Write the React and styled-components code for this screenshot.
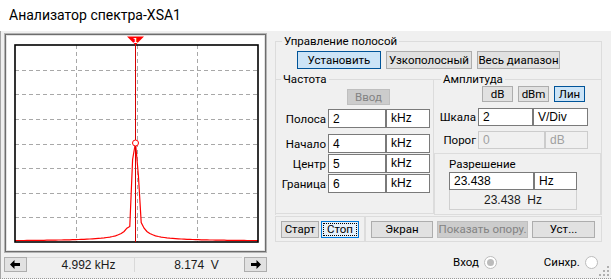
import React from "react";
import styled, { createGlobalStyle, css } from "styled-components";

const GlobalStyle = createGlobalStyle`
  html, body {
    margin: 0;
    padding: 0;
    background: #f0f0f0;
  }
  body {
    font-family: Roboto, "Liberation Sans", sans-serif;
    font-size: 11px;
    color: #000;
  }
`;

const Window = styled.div`
  position: relative;
  width: 611px;
  height: 279px;
  background: #f0f0f0;
  display: flex;
  flex-direction: column;
  overflow: hidden;
  box-sizing: border-box;
  border-bottom: 1px dotted #9a9a9a;
`;

const TitleBar = styled.div`
  height: 31px;
  flex: none;
  background: #fff;
  display: flex;
  align-items: center;
  padding: 0 0 1px 9px;
  box-sizing: border-box;
  font-size: 14px;
`;

const Body = styled.div`
  flex: 1;
  display: flex;
  padding: 2px 0 0 3px;
  border-left: 1px solid #a6a6a6;
`;

/* ---------- left: scope ---------- */

const LeftPane = styled.div`
  width: 263px;
  display: flex;
  flex-direction: column;
`;

const ScopeFrame = styled.div`
  height: 220px;
  box-sizing: border-box;
  border: 1px solid #b4b4b4;
  box-shadow: inset 0 0 0 1px #6d6d6d, inset 0 0 0 2px #e3e3e3;
  background: #fff;
  padding: 2px;
  svg {
    display: block;
  }
`;

const ReadoutBar = styled.div`
  margin-top: 4px;
  height: 15px;
  display: flex;
`;

const ArrowButton = styled.div`
  width: 23px;
  box-sizing: border-box;
  border: 1px solid #adadad;
  background: #e1e1e1;
  display: flex;
  align-items: center;
  justify-content: center;
  margin-left: ${(p) => (p.$right ? "2px" : "0")};
`;

const Readout = styled.div`
  flex: 1;
  box-sizing: border-box;
  border-top: 1px solid #d9d9d9;
  border-left: ${(p) => (p.$first ? "none" : "1px solid #d9d9d9")};
  display: flex;
  align-items: center;
  justify-content: center;
  padding-left: 16px;
  font-family: "Liberation Sans", sans-serif;
  font-size: 12px;
  color: #1a1a1a;
  white-space: pre;
`;

/* ---------- right: controls ---------- */

const RightPane = styled.div`
  margin-left: 8px;
  width: 327px;
  display: flex;
  flex-direction: column;
`;

const Group = styled.fieldset`
  margin: 0;
  padding: 0;
  min-width: 0;
  box-sizing: border-box;
  border: 1px solid #dcdcdc;
`;

const Legend = styled.legend`
  margin-left: ${(p) => p.$indent || 5}px;
  padding: 0 2px;
  font-size: 11.5px;
  line-height: 16px;
`;

const ControlGroup = styled(Group)`
  border-bottom: none;
`;

const ButtonRow = styled.div`
  display: flex;
  gap: ${(p) => p.$gap || 4}px;
  margin-top: ${(p) => p.$top || 0}px;
  padding-left: ${(p) => p.$left || 0}px;
`;

const Button = styled.button`
  box-sizing: border-box;
  width: ${(p) => p.$w}px;
  height: ${(p) => p.$h || 17}px;
  padding: 0;
  font-family: inherit;
  font-size: 11.5px;
  color: #000;
  background: #e1e1e1;
  border: 1px solid #adadad;
  white-space: nowrap;
  ${(p) =>
    p.$active &&
    css`
      background: #cce4f7;
      border-color: #005499;
    `}
  ${(p) =>
    p.$focused &&
    css`
      background: #e5f1fb;
      border-color: #0078d7;
      outline: 1px dotted #000;
      outline-offset: -3px;
    `}
  &:disabled {
    background: #cccccc;
    border-color: #bfbfbf;
    color: #838383;
  }
`;

const BandRow = styled.div`
  display: flex;
  margin-top: 2px;
`;

const FreqGroup = styled(Group)`
  width: 158px;
  height: 143px;
  border-left: none;
  border-bottom: 1px solid #dcdcdc;
`;

const AmpColumn = styled.div`
  flex: 1;
  display: flex;
  flex-direction: column;
`;

const AmpGroup = styled(Group)`
  border-left: none;
  border-right: none;
  border-bottom: none;
  height: 80px;
`;

const FieldRow = styled.div`
  display: flex;
  align-items: center;
  margin-top: ${(p) => p.$top || 0}px;
`;

const FieldLabel = styled.div`
  width: ${(p) => p.$w}px;
  text-align: right;
  padding-right: 2px;
  box-sizing: border-box;
  font-size: 11.5px;
`;

const Field = styled.div`
  box-sizing: border-box;
  width: ${(p) => p.$w}px;
  height: ${(p) => p.$h || 19}px;
  border: 1px solid #7a7a7a;
  background: #fff;
  padding: 0 4px;
  display: flex;
  align-items: ${(p) => (p.$unit ? "flex-start" : "center")};
  padding-top: ${(p) => (p.$unit ? "1px" : "0")};
  font-family: "Liberation Sans", sans-serif;
  font-size: 12px;
  ${(p) =>
    p.$disabled &&
    css`
      border-color: #cccccc;
      background: #f0f0f0;
      color: #a0a0a0;
    `}
`;

const ResolutionBox = styled.div`
  margin-top: 2px;
  height: 62px;
  box-sizing: border-box;
  border: 1px solid #dcdcdc;
  padding: 3px 0 0 14px;
`;

const BoxTitle = styled.div`
  line-height: 15px;
  font-size: 11.5px;
`;

const InfoField = styled.div`
  box-sizing: border-box;
  width: 128px;
  height: 20px;
  border: 1px solid #d0d0d0;
  border-top: none;
  display: flex;
  align-items: center;
  justify-content: center;
  white-space: pre;
  color: #1a1a1a;
  font-family: "Liberation Sans", sans-serif;
  font-size: 12px;
`;

const RunRow = styled.div`
  display: flex;
  margin-top: 1px;
`;

const RunBox = styled.div`
  box-sizing: border-box;
  width: ${(p) => p.$w}px;
  height: 26px;
  border: 1px solid #dcdcdc;
  display: flex;
  align-items: center;
  gap: ${(p) => p.$gap}px;
  padding-left: 5px;
`;

const RadioRow = styled.div`
  display: flex;
  align-items: center;
  margin-top: 13px;
  padding-left: 178px;
  font-size: 11.5px;
`;

const RadioLabel = styled.div`
  display: flex;
  align-items: center;
  gap: 5px;
  margin-right: ${(p) => p.$gap || 0}px;
`;

const Radio = styled.span`
  width: 13px;
  height: 13px;
  box-sizing: border-box;
  border-radius: 50%;
  border: 1px solid #bcbcbc;
  background: #fff;
  display: flex;
  align-items: center;
  justify-content: center;
  &::after {
    content: "";
    width: 7px;
    height: 7px;
    border-radius: 50%;
    background: ${(p) => (p.$checked ? "#bcbcbc" : "transparent")};
  }
`;

const Grip = styled.svg`
  position: absolute;
  right: 1px;
  bottom: 1px;
`;

/* ---------- drawings ---------- */

const Arrow = ({ right }) => (
  <svg width="11" height="9" viewBox="0 0 11 9">
    <path
      d="M0 4.5 L4.5 0 L4.5 3 L10 3 L10 6 L4.5 6 L4.5 9 Z"
      fill="#000"
      transform={right ? "translate(11 0) scale(-1 1)" : undefined}
    />
  </svg>
);

const PLOT = { x: 8, y: 9, w: 243, h: 197 };
const CURSOR_X = 128.5;
const BINS = 85;
const BIN_W = PLOT.w / BINS;

// peak shape near the cursor, then ~1/d leakage tails
const NEAR = { "-2": 15, "-1": 82, 0: 99, 1: 66, 2: 19 };

function binHeight(i) {
  if (NEAR[i] !== undefined) return NEAR[i];
  return 40 / Math.abs(i);
}

function spectrumPoints() {
  const bottom = PLOT.y + PLOT.h - 0.5;
  const center = Math.round((CURSOR_X - PLOT.x) / BIN_W);
  const pts = [`${PLOT.x},${(bottom - 1).toFixed(1)}`];
  for (let b = 0; b <= BINS; b++) {
    const i = b - center;
    const x = CURSOR_X + i * BIN_W;
    if (x < PLOT.x || x > PLOT.x + PLOT.w) continue;
    const y = bottom - Math.max(1, binHeight(i));
    pts.push(`${x.toFixed(1)},${y.toFixed(1)}`);
  }
  pts.push(`${PLOT.x + PLOT.w},${(bottom - 1).toFixed(1)}`);
  return pts.join(" ");
}

const Spectrum = () => {
  const vLines = [1, 2, 3].map((k) => Math.round(PLOT.x + (PLOT.w * k) / 4) + 0.5);
  const hLines = [1, 2, 3, 4, 5, 6, 7].map((k) => Math.round(PLOT.y + (PLOT.h * k) / 8) + 0.5);
  return (
    <svg width="257" height="214" viewBox="0 0 257 214">
      {vLines.map((x) => (
        <line key={x} x1={x} y1={PLOT.y} x2={x} y2={PLOT.y + PLOT.h} stroke="#a8a8a8" strokeDasharray="4 3" />
      ))}
      {hLines.map((y) => (
        <line key={y} x1={PLOT.x} y1={y} x2={PLOT.x + PLOT.w} y2={y} stroke="#a8a8a8" strokeDasharray="4 3" />
      ))}
      <polyline points={spectrumPoints()} fill="none" stroke="#ff0000" strokeWidth="1.2" />
      <rect x={PLOT.x} y={PLOT.y} width={PLOT.w} height={PLOT.h} fill="none" stroke="#000" strokeWidth="1.6" />
      <line x1={CURSOR_X} y1={7} x2={CURSOR_X} y2={PLOT.y + PLOT.h} stroke="#d40000" />
      <circle cx={CURSOR_X} cy={107} r="3" fill="#fff" stroke="#ff0000" />
      <path d={`M${CURSOR_X - 8.5} 0.5 L${CURSOR_X + 8.5} 0.5 L${CURSOR_X} 9 Z`} fill="#ff0000" />
      <text x={CURSOR_X} y={6.6} textAnchor="middle" fontSize="7" fontWeight="bold" fill="#fff" fontFamily="DejaVu Sans, sans-serif">
        1
      </text>
    </svg>
  );
};

const FREQ_ROWS = [
  { label: "Начало", value: "4", top: 6 },
  { label: "Центр", value: "5", top: 1 },
  { label: "Граница", value: "6", top: 1 },
];

export default function App() {
  return (
    <>
      <GlobalStyle />
      <Window>
        <TitleBar>Анализатор спектра-XSA1</TitleBar>
        <Body>
          <LeftPane>
            <ScopeFrame>
              <Spectrum />
            </ScopeFrame>
            <ReadoutBar>
              <ArrowButton>
                <Arrow />
              </ArrowButton>
              <Readout $first>4.992 kHz</Readout>
              <Readout>{"8.174  V"}</Readout>
              <ArrowButton $right>
                <Arrow right />
              </ArrowButton>
            </ReadoutBar>
          </LeftPane>

          <RightPane>
            <ControlGroup>
              <Legend $indent={6}>Управление полосой</Legend>
              <ButtonRow $top={2} $left={21} $gap={5}>
                <Button $w={84} $h={18} $active>
                  Установить
                </Button>
                <Button $w={86} $h={18}>
                  Узкополосный
                </Button>
                <Button $w={83} $h={18}>
                  Весь диапазон
                </Button>
              </ButtonRow>

              <BandRow>
                <FreqGroup>
                  <Legend $indent={5}>Частота</Legend>
                  <ButtonRow $top={2} $left={71}>
                    <Button $w={43} $h={16} disabled>
                      Ввод
                    </Button>
                  </ButtonRow>
                  <FieldRow $top={4}>
                    <FieldLabel $w={52}>Полоса</FieldLabel>
                    <Field $w={58}>2</Field>
                    <Field $w={44} $unit>
                      kHz
                    </Field>
                  </FieldRow>
                  {FREQ_ROWS.map((r) => (
                    <FieldRow key={r.label} $top={r.top}>
                      <FieldLabel $w={52}>{r.label}</FieldLabel>
                      <Field $w={58}>{r.value}</Field>
                      <Field $w={44} $unit>
                        kHz
                      </Field>
                    </FieldRow>
                  ))}
                </FreqGroup>

                <AmpColumn>
                  <AmpGroup>
                    <Legend $indent={7}>Амплитуда</Legend>
                    <ButtonRow $top={-1} $left={48} $gap={5}>
                      <Button $w={31} $h={16}>
                        dB
                      </Button>
                      <Button $w={31} $h={16}>
                        dBm
                      </Button>
                      <Button $w={31} $h={16} $active>
                        Лин
                      </Button>
                    </ButtonRow>
                    <FieldRow $top={6}>
                      <FieldLabel $w={44}>Шкала</FieldLabel>
                      <Field $w={55} $h={18}>
                        2
                      </Field>
                      <Field $w={55} $h={18} $unit>
                        V/Div
                      </Field>
                    </FieldRow>
                    <FieldRow $top={5}>
                      <FieldLabel $w={44}>Порог</FieldLabel>
                      <Field $w={67} $h={18} $disabled>
                        0
                      </Field>
                      <Field $w={43} $h={18} $unit $disabled>
                        dB
                      </Field>
                    </FieldRow>
                  </AmpGroup>
                  <ResolutionBox>
                    <BoxTitle>Разрешение</BoxTitle>
                    <FieldRow $top={0}>
                      <Field $w={85} $h={18}>
                        23.438
                      </Field>
                      <Field $w={43} $h={18} $unit>
                        Hz
                      </Field>
                    </FieldRow>
                    <InfoField>{"23.438  Hz"}</InfoField>
                  </ResolutionBox>
                </AmpColumn>
              </BandRow>
            </ControlGroup>

            <RunRow>
              <RunBox $w={90} $gap={2}>
                <Button $w={38}>Старт</Button>
                <Button $w={38} $focused>
                  Стоп
                </Button>
              </RunBox>
              <RunBox $w={237} $gap={4}>
                <Button $w={62}>Экран</Button>
                <Button $w={91} disabled>
                  Показать опору.
                </Button>
                <Button $w={63}>Уст...</Button>
              </RunBox>
            </RunRow>

            <RadioRow>
              <RadioLabel $gap={47}>
                Вход
                <Radio $checked />
              </RadioLabel>
              <RadioLabel>
                Синхр.
                <Radio />
              </RadioLabel>
            </RadioRow>
          </RightPane>
        </Body>
        <Grip width="11" height="11" viewBox="0 0 11 11">
          {[
            [9, 1],
            [9, 5],
            [5, 5],
            [9, 9],
            [5, 9],
            [1, 9],
          ].map(([x, y]) => (
            <rect key={`${x}-${y}`} x={x - 1} y={y - 1} width="2" height="2" fill="#b0b0b0" />
          ))}
        </Grip>
      </Window>
    </>
  );
}
